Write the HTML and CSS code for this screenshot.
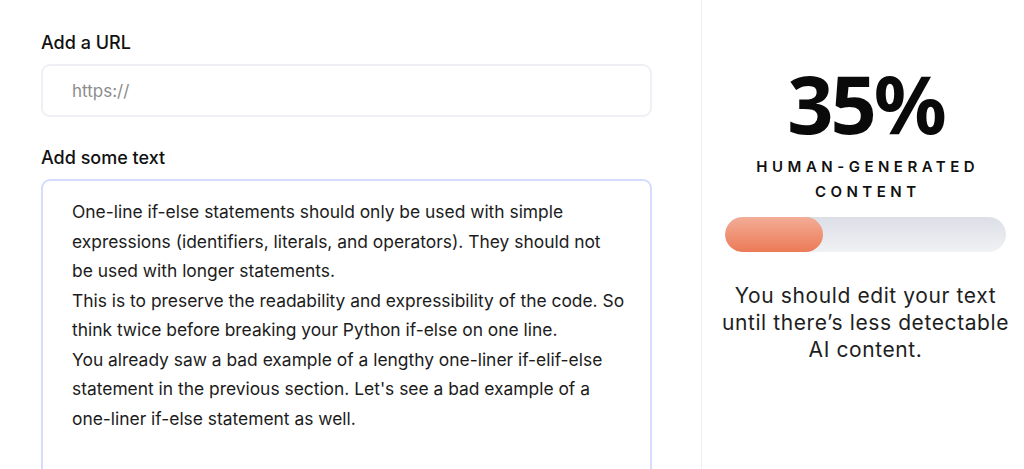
FILE: index.html
```html
<!DOCTYPE html>
<html lang="en">
<head>
<meta charset="utf-8">
<title>AI Content Detector</title>
<link rel="stylesheet" href="styles.css">
</head>
<body>
<main class="page">
  <section class="editor">
    <label class="field-label" for="url">Add a URL</label>
    <input class="url-input" id="url" type="text" placeholder="https://">
    <label class="field-label field-label--second" for="text">Add some text</label>
    <div class="text-box" id="text">
      <p>One-line if-else statements should only be used with simple<br>expressions (identifiers, literals, and operators). They should not<br>be used with longer statements.</p>
      <p>This is to preserve the readability and expressibility of the code. So<br>think twice before breaking your Python if-else on one line.</p>
      <p>You already saw a bad example of a lengthy one-liner if-elif-else<br>statement in the previous section. Let's see a bad example of a<br>one-liner if-else statement as well.</p>
    </div>
  </section>
  <aside class="result">
    <div class="score">35%</div>
    <div class="score-label">HUMAN-GENERATED<br>CONTENT</div>
    <div class="meter"><div class="meter-fill" style="width:35%"></div></div>
    <p class="advice">You should edit your text<br>until there’s less detectable<br>AI content.</p>
  </aside>
</main>
</body>
</html>
```
FILE: styles.css
```css
* { box-sizing: border-box; }
html, body { margin: 0; padding: 0; background: #fff; }
body {
  font-family: Inter, "Noto Sans", sans-serif;
  color: #1a1a1a;
  height: 469px;
  overflow: hidden;
}
.page {
  display: flex;
  height: 469px;
}
.editor {
  width: 702px;
  flex-shrink: 0;
  border-right: 1px solid #eeeef3;
  padding: 31px 49px 0 41px;
  display: flex;
  flex-direction: column;
}
.field-label {
  display: block;
  flex-shrink: 0;
  font-size: 18px;
  line-height: 24px;
  font-weight: 500;
  color: #111;
  margin-bottom: 9px;
}
.field-label--second { margin-top: 29px; }
.url-input {
  flex-shrink: 0;
  width: 611px;
  height: 53px;
  border: 2px solid #efeff5;
  border-radius: 9px;
  padding: 0 29px;
  font-family: Inter, "Noto Sans", sans-serif;
  font-size: 17px;
  color: #333;
  outline: none;
  background: #fff;
}
.url-input::placeholder { color: #8c8c8c; }
.text-box {
  width: 611px;
  flex: 1 1 auto;
  min-height: 0;
  border: 2px solid #d5dcff;
  border-bottom: none;
  border-radius: 9px 9px 0 0;
  padding: 16px 10px 0 29px;
  font-size: 17.4px;
  line-height: 29.5px;
  color: #1c1c1c;
  white-space: nowrap;
}
.text-box p { margin: 0; }
.result {
  flex: 1;
  padding: 0 18px 0 23px;
  display: flex;
  flex-direction: column;
  align-items: center;
  text-align: center;
}
.score {
  margin-top: 62px;
  font-family: "Noto Sans", sans-serif;
  font-weight: 700;
  font-size: 81px;
  line-height: 81px;
  letter-spacing: -3px;
  color: #0a0a0a;
}
.score-label {
  margin-top: 11px;
  font-size: 15px;
  line-height: 25px;
  font-weight: 600;
  letter-spacing: 4.5px;
  padding-left: 4.5px;
  color: #111;
}
.meter {
  width: 100%;
  height: 35px;
  margin-top: 13px;
  border-radius: 18px;
  background: linear-gradient(180deg, #dcdfe7 0%, #f0f1f4 100%);
  overflow: hidden;
}
.meter-fill {
  height: 100%;
  border-radius: 18px;
  background: linear-gradient(180deg, #f3ad97 0%, #ec7a56 100%);
}
.advice {
  margin: 30px -14px 0;
  font-size: 21px;
  line-height: 27px;
  letter-spacing: 0.6px;
  color: #1e1e1e;
  white-space: nowrap;
}
```
